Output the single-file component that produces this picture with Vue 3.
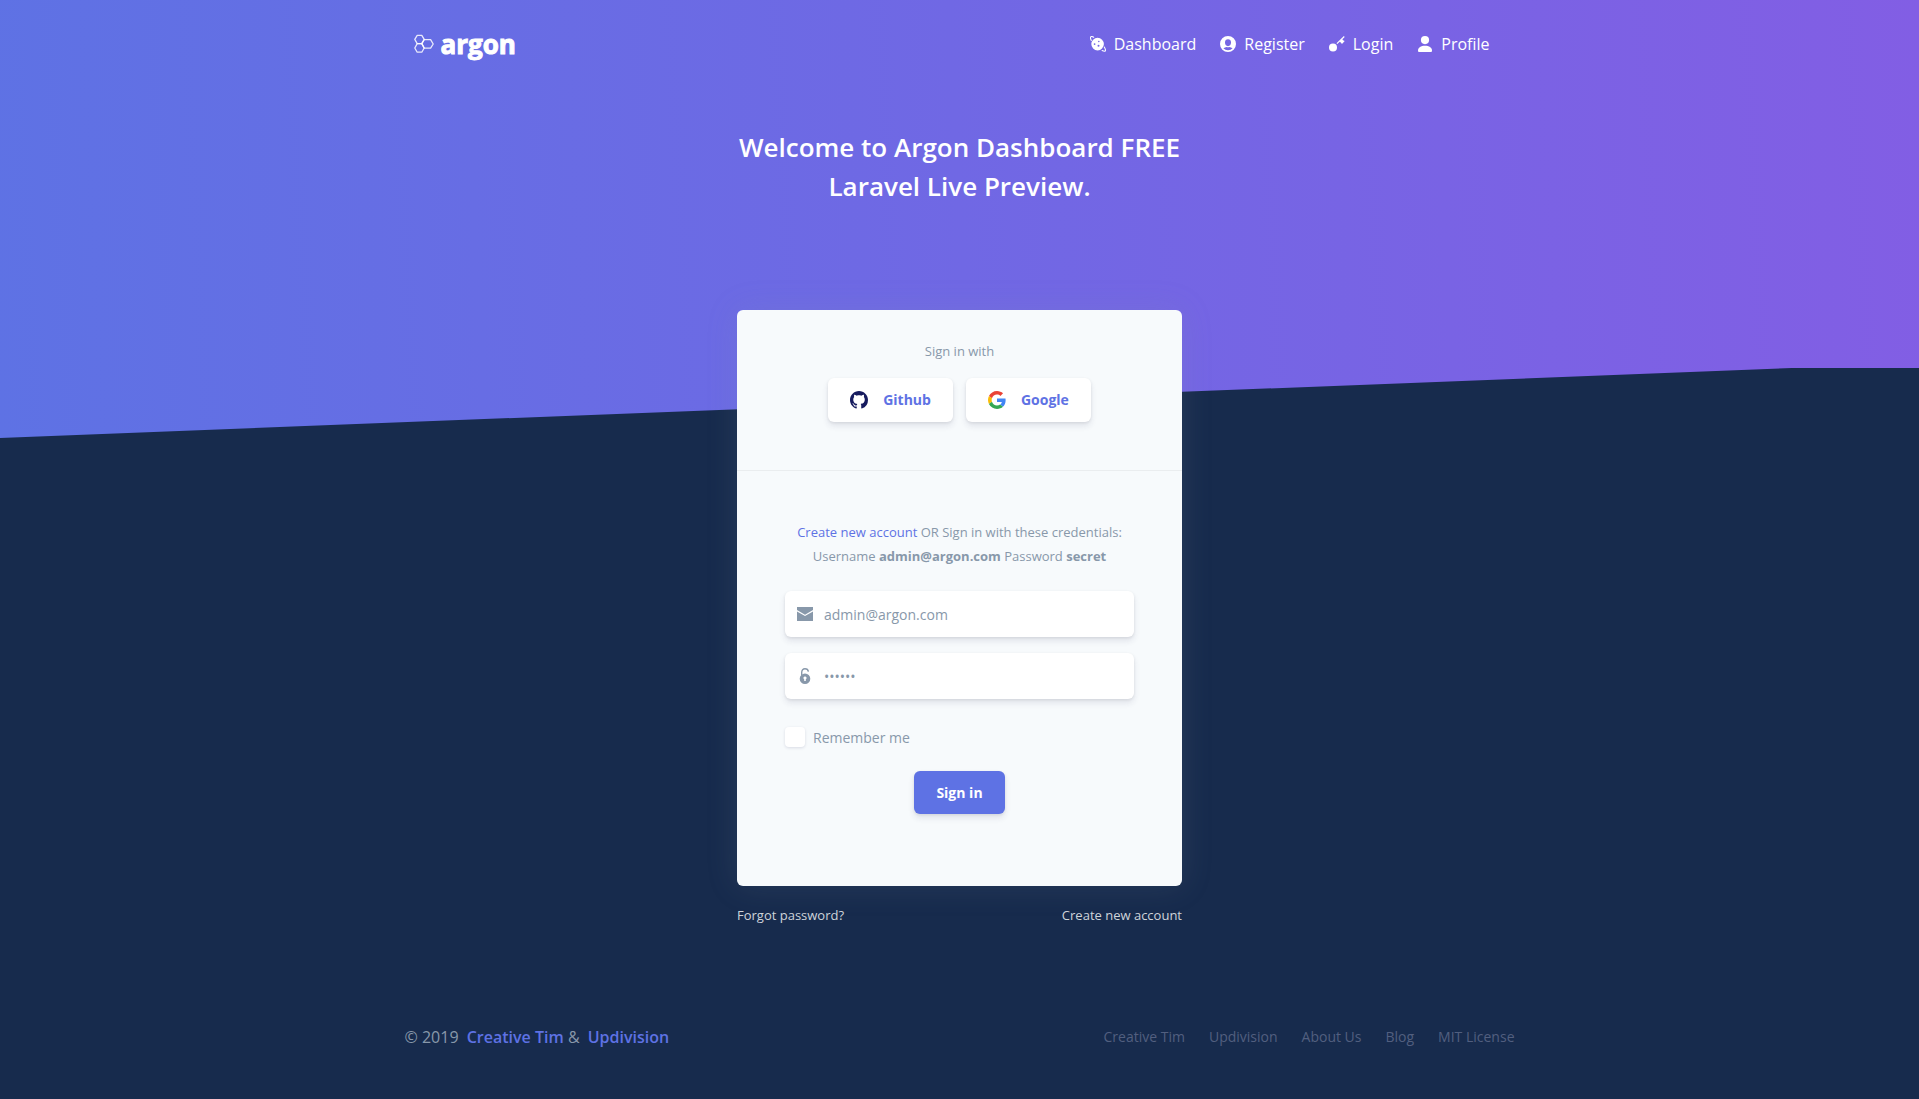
<script setup>
import { ref } from 'vue'

const email = ref('admin@argon.com')
const password = ref('secret')
const remember = ref(false)

const navItems = [
  { label: 'Dashboard', icon: 'planet' },
  { label: 'Register', icon: 'circle' },
  { label: 'Login', icon: 'key' },
  { label: 'Profile', icon: 'single' },
]

const footerLinks = ['Creative Tim', 'Updivision', 'About Us', 'Blog', 'MIT License']
</script>

<template>
  <div class="page">
    <header class="hero">
      <nav class="navbar container">
        <a class="brand" href="#" aria-label="argon">
          <svg class="brand-mark" viewBox="0 0 20 20" fill="none" stroke="currentColor" stroke-width="1.3" stroke-linejoin="round" stroke-opacity="0.85">
            <path d="M3.2 1.4h4.6L10.2 5.4 7.8 9.6H3.2L0.8 5.4z" />
            <path d="M3.2 9.6h4.6l2.4 4.4-2.4 4.2H3.2L0.8 14z" />
            <path d="M12 5.6h4.6L19.2 10l-2.6 4.1H10.2L7.8 9.6 10.2 5.6z" />
          </svg>
          <span>argon</span>
        </a>
        <ul class="nav-list">
          <li v-for="item in navItems" :key="item.label">
            <a href="#">
              <svg v-if="item.icon === 'planet'" viewBox="0 0 16 16" fill="none">
                <path fill="currentColor" fill-rule="evenodd" d="M7.600 1.800a6.300 6.300 0 1 0 0 12.600 6.300 6.300 0 0 0 0-12.600zM4.600 7.200a.9.900 0 1 1 0 1.800.9.900 0 0 1 0-1.800zM8.800 4.700a.8.800 0 1 1 0 1.600.8.800 0 0 1 0-1.600zM8.500 8.800a1 1 0 1 1 0 2 1 1 0 0 1 0-2z" />
                <path stroke="currentColor" stroke-width="1.100" stroke-linecap="round" d="M1.300 4.400C.5 2.800.2 1.400.8.800c.5-.5 1.600-.3 2.900.4M14.300 11c1.100 1.900 1.500 3.400.9 4-.5.500-1.700.2-3.100-.5" />
              </svg>
              <svg v-else-if="item.icon === 'circle'" viewBox="0 0 16 16">
                <path fill="currentColor" fill-rule="evenodd" d="M8 0a8 8 0 1 0 0 16A8 8 0 0 0 8 0zM8 3.200c1.800 0 3 1.300 3 3v.6c0 1.800-1.300 3.400-3 3.400S5 8.600 5 6.800v-.6c0-1.700 1.200-3 3-3zM3.400 12.300c1-.8 2.300-1.200 3.200-1.300.9.400 1.900.4 2.800 0 .9.100 2.200.5 3.200 1.300A6.200 6.200 0 0 1 8 14.200a6.200 6.200 0 0 1-4.600-1.900z" />
              </svg>
              <svg v-else-if="item.icon === 'key'" viewBox="0 0 16 16">
                <circle cx="4" cy="11.500" r="4" fill="currentColor" />
                <path d="M7.900 7.600 15.300.5" stroke="currentColor" stroke-width="1.200" />
                <path d="M10.300 5.300 13 2.700l1 1.600 1.700.6-2.700 3-1.300-1.500z" fill="currentColor" />
              </svg>
              <svg v-else viewBox="0 0 16 16" fill="currentColor">
                <circle cx="8" cy="4.100" r="4.100" />
                <path d="M8 9.700c-4 0-7 1.800-7 4.700 0 1 .4 1.600 1.600 1.600h10.800c1.200 0 1.600-.6 1.600-1.600 0-2.900-3-4.700-7-4.700z" />
              </svg>
              <span>{{ item.label }}</span>
            </a>
          </li>
        </ul>
      </nav>
      <h1>Welcome to Argon Dashboard FREE Laravel Live Preview.</h1>
      <div class="separator" aria-hidden="true">
        <svg viewBox="0 0 2560 100" width="2560" height="100">
          <polygon points="2560,0 2560,100 0,100" />
        </svg>
      </div>
    </header>

    <main class="login">
      <div class="card">
        <section class="card-header">
          <p>Sign in with</p>
          <div class="social">
            <button type="button" class="btn btn-neutral">
              <svg viewBox="0 0 16 16" fill="#161b5e">
                <path d="M8 0C3.580 0 0 3.580 0 8c0 3.540 2.290 6.530 5.470 7.590.4.070.55-.17.55-.38 0-.19-.01-.82-.01-1.490-2.010.37-2.530-.49-2.690-.94-.09-.23-.48-.94-.82-1.130-.28-.15-.68-.52-.01-.53.63-.01 1.080.58 1.230.82.720 1.210 1.870.87 2.330.66.070-.52.280-.87.510-1.070-1.780-.2-3.640-.89-3.640-3.950 0-.87.310-1.590.820-2.150-.08-.2-.36-1.020.080-2.120 0 0 .67-.21 2.200.820.640-.18 1.320-.27 2-.27s1.360.090 2 .27c1.530-1.040 2.200-.82 2.200-.82.440 1.100.160 1.920.080 2.120.510.560.820 1.270.820 2.150 0 3.070-1.870 3.750-3.650 3.950.290.250.540.730.540 1.480 0 1.070-.01 1.930-.01 2.200 0 .21.150.46.550.38A8.010 8.010 0 0 0 16 8c0-4.420-3.580-8-8-8z" />
              </svg>
              <span>Github</span>
            </button>
            <button type="button" class="btn btn-neutral">
              <svg viewBox="0 0 48 48">
                <path fill="#EA4335" d="M24 9.500c3.540 0 6.710 1.220 9.210 3.600l6.850-6.850C35.900 2.380 30.470 0 24 0 14.620 0 6.510 5.380 2.560 13.220l7.980 6.190C12.430 13.720 17.740 9.500 24 9.500z" />
                <path fill="#4285F4" d="M46.980 24.550c0-1.570-.15-3.090-.38-4.550H24v9.020h12.940c-.58 2.960-2.260 5.480-4.780 7.180l7.730 6c4.510-4.180 7.090-10.360 7.090-17.650z" />
                <path fill="#FBBC05" d="M10.530 28.590c-.48-1.450-.76-2.990-.76-4.590s.27-3.140.76-4.590l-7.980-6.190C.92 16.460 0 20.120 0 24s.92 7.540 2.560 10.780l7.970-6.190z" />
                <path fill="#34A853" d="M24 48c6.480 0 11.930-2.130 15.890-5.810l-7.730-6c-2.150 1.450-4.920 2.300-8.160 2.300-6.260 0-11.570-4.220-13.470-9.910l-7.980 6.190C6.510 42.620 14.620 48 24 48z" />
              </svg>
              <span>Google</span>
            </button>
          </div>
        </section>

        <form class="card-body" @submit.prevent>
          <p class="hint">
            <a href="#">Create new account</a> OR Sign in with these credentials:<br />
            Username <strong>admin@argon.com</strong> Password <strong>secret</strong>
          </p>
          <div class="field">
            <svg viewBox="0 0 16 16" fill="currentColor" aria-hidden="true">
              <path d="M0 1h16v3L8 8.700 0 4z" />
              <path d="M0 5.400 8 10l8-4.600V15H0z" />
            </svg>
            <input v-model="email" type="email" aria-label="Email" />
          </div>
          <div class="field">
            <svg viewBox="0 0 16 16" fill="none" aria-hidden="true">
              <path d="M4.700 7V4.500C4.700 2.200 6 .8 8 .8c1.900 0 3.100 1 3.400 2.900" stroke="currentColor" stroke-width="1.400" />
              <path fill="currentColor" fill-rule="evenodd" d="M8 5.400a5.300 5.300 0 1 0 0 10.600A5.300 5.300 0 0 0 8 5.400zM8 8.400a1.500 1.500 0 0 1 .8 2.800V13H7.200v-1.800A1.500 1.500 0 0 1 8 8.400z" />
            </svg>
            <input v-model="password" type="password" aria-label="Password" />
          </div>
          <label class="remember">
            <input v-model="remember" type="checkbox" />
            <span>Remember me</span>
          </label>
          <button type="submit" class="btn btn-primary">Sign in</button>
        </form>
      </div>
      <div class="below">
        <a href="#">Forgot password?</a>
        <a href="#">Create new account</a>
      </div>
    </main>

    <footer class="footer container">
      <p>© 2019 <a href="#" class="credit">Creative Tim</a> &amp; <a href="#" class="credit">Updivision</a></p>
      <ul>
        <li v-for="link in footerLinks" :key="link"><a href="#">{{ link }}</a></li>
      </ul>
    </footer>
  </div>
</template>

<style>
body {
  margin: 0;
  background: #172b4d;
}
</style>

<style scoped>
.page {
  min-height: 100vh;
  font-family: "Open Sans", "Noto Sans", sans-serif;
  font-size: 16px;
  line-height: 24px;
  color: #8898aa;
}
.page * {
  box-sizing: border-box;
}
a {
  color: inherit;
  text-decoration: none;
}
ul {
  list-style: none;
  margin: 0;
  padding: 0;
}
p {
  margin: 0;
}
.container {
  max-width: 1110px;
  margin: 0 auto;
}
.hero {
  position: relative;
  height: 438px;
  background: linear-gradient(87deg, #5e72e4 0, #825ee4 100%);
  color: #fff;
}
.navbar {
  display: flex;
  align-items: center;
  justify-content: space-between;
  height: 88px;
  padding: 0 25px 0 9px;
}
.brand {
  display: flex;
  align-items: center;
  gap: 7px;
  font-size: 26px;
  font-weight: 700;
  -webkit-text-stroke: 1px currentColor;
}
.brand-mark {
  width: 20px;
  height: 20px;
}
.nav-list {
  display: flex;
  gap: 24px;
  font-weight: 500;
}
.nav-list a {
  display: flex;
  align-items: center;
  gap: 8px;
}
.nav-list svg {
  width: 16px;
  height: 16px;
}
h1 {
  max-width: 445px;
  margin: 40px auto 0;
  font-size: 26px;
  line-height: 39px;
  font-weight: 600;
  text-align: center;
}
.separator {
  position: absolute;
  left: 0;
  right: 0;
  bottom: 0;
  height: 70px;
  overflow: hidden;
}
.separator svg {
  position: absolute;
  left: 0;
  bottom: 0;
}
.separator polygon {
  fill: #172b4d;
}
.login {
  position: relative;
  max-width: 445px;
  margin: -128px auto 0;
}
.card {
  background: #f7fafc;
  border-radius: 6px;
  box-shadow: 0 0 32px rgba(136, 152, 170, 0.15);
}
.card-header {
  padding: 29px 24px 48px;
  border-bottom: 1px solid rgba(0, 0, 0, 0.05);
  font-size: 13px;
  text-align: center;
}
.social {
  display: flex;
  justify-content: center;
  gap: 13px;
  margin-top: 15px;
}
.btn {
  height: 44px;
  padding: 0 22px;
  border: 0;
  border-radius: 6px;
  font: 700 14px/24px "Open Sans", "Noto Sans", sans-serif;
  box-shadow: 0 4px 6px rgba(50, 50, 93, 0.11), 0 1px 3px rgba(0, 0, 0, 0.08);
  cursor: pointer;
}
.btn-neutral {
  display: flex;
  align-items: center;
  gap: 15px;
  background: #fff;
  color: #5e72e4;
}
.btn-neutral svg {
  width: 18px;
  height: 18px;
}
.btn-primary {
  align-self: center;
  height: 43px;
  background: #5e72e4;
  color: #fff;
}
.card-body {
  display: flex;
  flex-direction: column;
  padding: 49px 48px 72px;
}
.hint {
  margin-bottom: 23px;
  font-size: 13px;
  text-align: center;
}
.hint a {
  color: #5e72e4;
}
.field {
  display: flex;
  align-items: center;
  height: 46px;
  margin-bottom: 16px;
  padding: 0 12px;
  background: #fff;
  border-radius: 6px;
  box-shadow: 0 4px 6px rgba(50, 50, 93, 0.11), 0 1px 3px rgba(0, 0, 0, 0.08);
}
.field svg {
  width: 16px;
  height: 16px;
  flex: none;
}
.field input {
  flex: 1;
  min-width: 0;
  height: 44px;
  padding: 0 11px;
  border: 0;
  outline: 0;
  background: none;
  color: #8898aa;
  font: 400 14px/24px "Open Sans", "Noto Sans", sans-serif;
}
.remember {
  display: flex;
  align-items: flex-start;
  gap: 8px;
  margin: 12px 0 22px;
  font-size: 14px;
  line-height: 22px;
}
.remember input {
  appearance: none;
  width: 20px;
  height: 20px;
  margin: 0;
  background: #fff;
  border-radius: 4px;
  box-shadow: 0 1px 3px rgba(50, 50, 93, 0.15);
}
.below {
  display: flex;
  justify-content: space-between;
  margin-top: 17px;
  font-size: 13px;
  color: #ced4da;
}
.footer {
  display: flex;
  align-items: center;
  justify-content: space-between;
  padding: 98px 0 48px;
}
.credit {
  margin-left: 4px;
  font-weight: 600;
  color: #5e72e4;
}
.footer ul {
  display: flex;
  gap: 24px;
  font-size: 14px;
  color: #525f7f;
}
</style>
